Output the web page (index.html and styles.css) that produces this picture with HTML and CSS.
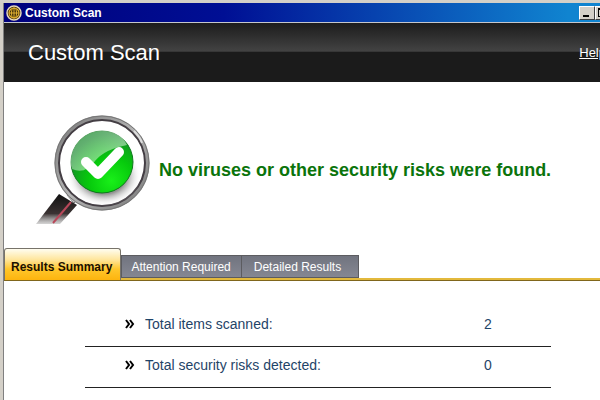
FILE: index.html
```html
<!DOCTYPE html>
<html lang="en">
<head>
    <meta charset="UTF-8">
    <title>Custom Scan</title>
    <link rel="stylesheet" href="styles.css">
</head>
<body>
<div class="window">
    <div class="titlebar">
        <svg class="app-icon" width="16" height="16" viewBox="0 0 16 16">
            <circle cx="8" cy="8" r="7" fill="#3a2a10" stroke="#e8d9b8" stroke-width="1.5"/>
            <circle cx="8" cy="8" r="5" fill="#3a2a08" stroke="#e0b030" stroke-width="1.2"/>
            <path d="M8 3v10M3 8h10" stroke="#e0b030" fill="none"/>
            <ellipse cx="8" cy="8" rx="2.5" ry="5" stroke="#e0b030" fill="none"/>
        </svg>
        <span class="caption">Custom Scan</span>
        <button class="win-btn" type="button" aria-label="Minimize">
            <svg width="12" height="10" viewBox="0 0 12 10"><path d="M2 7h6v2H2z"/></svg>
        </button>
        <button class="win-btn" type="button" aria-label="Maximize">
            <svg width="12" height="10" viewBox="0 0 12 10"><path d="M1 0h9v9H1zM2 2v6h7V2z" fill-rule="evenodd"/></svg>
        </button>
        <button class="win-btn win-close" type="button" aria-label="Close">
            <svg width="12" height="10" viewBox="0 0 12 10"><path d="M2 1l7 7M9 1L2 8" stroke="#000" stroke-width="2"/></svg>
        </button>
    </div>
    <div class="header">
        <h1>Custom Scan</h1>
        <a href="#">Help</a>
    </div>
    <div class="status">
        <svg class="lens" width="124" height="116" viewBox="0 0 124 116">
            <defs>
                <linearGradient id="handle" x1="0" y1="0" x2="0" y2="1">
                    <stop offset="0" stop-color="#111"/>
                    <stop offset=".65" stop-color="#3a3232"/>
                    <stop offset="1" stop-color="#aaa" stop-opacity=".5"/>
                </linearGradient>
                <linearGradient id="rim" x1="0" y1="0" x2="1" y2="1">
                    <stop offset="0" stop-color="#777"/>
                    <stop offset=".5" stop-color="#b5b5b5"/>
                    <stop offset="1" stop-color="#777"/>
                </linearGradient>
                <radialGradient id="ball" cx=".65" cy=".8" r=".75">
                    <stop offset="0" stop-color="#19f019"/>
                    <stop offset=".5" stop-color="#06c80c"/>
                    <stop offset="1" stop-color="#16892b"/>
                </radialGradient>
                <linearGradient id="gloss" x1="0" y1="0" x2="1" y2="1">
                    <stop offset="0" stop-color="#fff" stop-opacity=".2"/>
                    <stop offset="1" stop-color="#fff" stop-opacity=".6"/>
                </linearGradient>
                <radialGradient id="shade">
                    <stop offset=".6" stop-color="#777" stop-opacity=".8"/>
                    <stop offset="1" stop-color="#fff" stop-opacity="0"/>
                </radialGradient>
            </defs>
            <path d="M28 85l18 11-17 19H5z" fill="url(#handle)"/>
            <path d="M40 93L22 114" stroke="#b8485a" stroke-width="2"/>
            <path d="M36 86l4-4 8 7-5 5z" fill="#ddd" stroke="#777"/>
            <circle cx="71" cy="54" r="45" fill="#fff" stroke="url(#rim)" stroke-width="5"/>
            <circle cx="71" cy="54" r="47" fill="none" stroke="#777"/>
            <circle cx="71" cy="54" r="43" fill="none" stroke="#443e44" stroke-width="2"/>
            <path d="M103 22q6 6 8 12" stroke="#ddd" stroke-width="2" fill="none"/>
            <ellipse cx="73" cy="67" rx="37" ry="30" fill="url(#shade)"/>
            <circle cx="71" cy="53" r="31" fill="url(#ball)" stroke="#0d7a1c"/>
            <path d="M41 60A30 30 0 0 1 96 36Q74 40 64 52Q54 66 41 60z" fill="url(#gloss)"/>
            <path d="M55 53l12 12 21-22" stroke="#fff" stroke-width="10" stroke-linecap="round" stroke-linejoin="round" fill="none"/>
        </svg>
        <p class="message">No viruses or other security risks were found.</p>
    </div>
    <div class="tabs" role="tablist">
        <button class="tab selected" type="button" role="tab" aria-selected="true">Results Summary</button>
        <button class="tab" type="button" role="tab" aria-selected="false">Attention Required</button>
        <button class="tab last" type="button" role="tab" aria-selected="false">Detailed Results</button>
    </div>
    <div class="results">
        <table>
            <tr>
                <th scope="row">
                    <svg class="arrows" width="10" height="10" viewBox="0 0 10 10"><path d="M1 1l3 4-3 4M5 1l3 4-3 4"/></svg>Total items scanned:
                </th>
                <td>2</td>
            </tr>
            <tr>
                <th scope="row">
                    <svg class="arrows" width="10" height="10" viewBox="0 0 10 10"><path d="M1 1l3 4-3 4M5 1l3 4-3 4"/></svg>Total security risks detected:
                </th>
                <td>0</td>
            </tr>
        </table>
    </div>
</div>
</body>
</html>
```

FILE: styles.css
```css
body {
    margin: 0;
    height: 100vh;
    overflow: hidden;
    background: #fff;
    font-family: "Liberation Sans", Arial, sans-serif;
}
/* the window runs past the right edge of the screen */
.window {
    box-sizing: border-box;
    min-height: 100vh;
    margin-right: -34px;
    border: 3px solid #d4d0c8;
    border-bottom: 0;
    box-shadow: inset 1px 0 0 #808080;
    padding-left: 1px;
}
.titlebar {
    display: flex;
    align-items: center;
    height: 19px;
    padding: 0 2px;
    border-bottom: 1px solid #c4c6cc;
    background: linear-gradient(to right, #00007c, #000f94 35%, #1084d0 90%);
}
.app-icon {
    margin-right: 3px;
}
.caption {
    flex: 1;
    color: #fff;
    font-size: 12px;
    font-weight: bold;
}
.win-btn {
    display: flex;
    align-items: center;
    justify-content: center;
    width: 16px;
    height: 14px;
    padding: 0;
    background: #d4d0c8;
    border: 1px solid;
    border-color: #fff #404040 #404040 #fff;
}
.win-btn svg {
    flex: none;
}
.win-close {
    margin-left: 2px;
}
.header {
    display: flex;
    align-items: center;
    justify-content: space-between;
    height: 59px;
    padding: 0 25px 0 24px;
    background: linear-gradient(#1c1c1c, #434343 48%, #1b1b1b 49%, #1b1b1b);
    color: #fff;
}
.header h1 {
    margin: 0;
    font-size: 22px;
    font-weight: normal;
}
.header a {
    color: #fff;
    font-size: 13px;
}
.status {
    display: flex;
    align-items: center;
    height: 166px;
    padding-left: 27px;
    box-sizing: border-box;
}
.lens {
    flex: none;
    margin-top: 4px;
}
.message {
    margin: 10px 0 0 4px;
    color: #0b740b;
    font-size: 18px;
    font-weight: bold;
    white-space: nowrap;
}
.tabs {
    display: flex;
    align-items: flex-end;
    border-bottom: 1px solid #80661c;
    background: linear-gradient(#e3b93c, #e3b93c) bottom / 100% 2px no-repeat;
}
.tab {
    height: 23px;
    margin-bottom: 2px;
    padding: 0 10px 0 9px;
    border: 1px solid #5c5c60;
    border-right: 0;
    background: linear-gradient(#71747f, #858792);
    color: #fff;
    font-family: inherit;
    font-size: 12px;
    white-space: nowrap;
}
.tab.last {
    padding: 0 17px 0 12px;
    border-right: 1px solid #5c5c60;
}
.tab.selected {
    height: 32px;
    margin-bottom: 0;
    padding: 4px 8px 0 6px;
    border: 1px solid #77736a;
    border-bottom: 0;
    border-radius: 3px 3px 0 0;
    background: linear-gradient(#fffdf0, #ffe59a 35%, #ffc62b 65%, #fdb40e);
    color: #1c1000;
    font-weight: bold;
}
.results {
    padding: 25px 80px 0 81px;
}
.results table {
    width: 100%;
    border-collapse: collapse;
    color: #1f4468;
    font-size: 14px;
}
.results th,
.results td {
    height: 36px;
    padding: 0 0 4px;
    border-bottom: 1px solid #222;
}
.results th {
    padding-left: 40px;
    font-weight: normal;
    text-align: left;
}
.results td {
    width: 67px;
    text-align: left;
}
.arrows {
    margin-right: 10px;
    fill: none;
    stroke: #000;
    stroke-width: 2;
}
```
